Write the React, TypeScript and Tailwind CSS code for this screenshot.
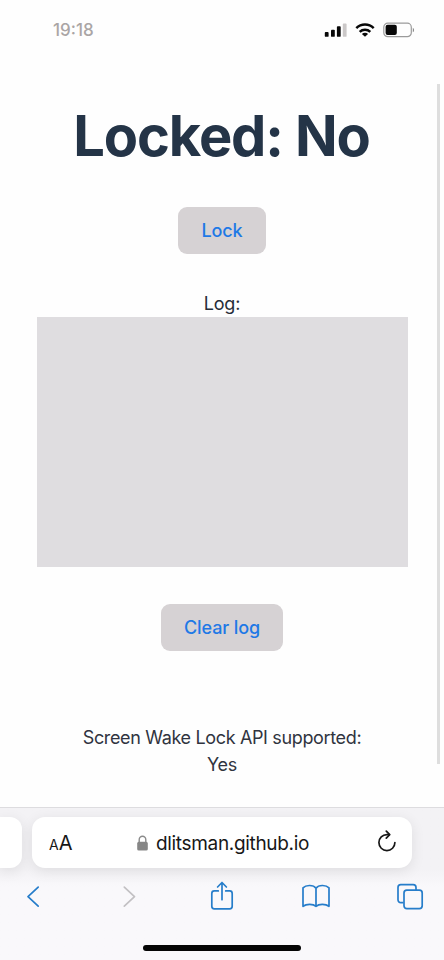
function StatusBar() {
  return (
    <header className="flex h-[60px] items-center justify-between pl-[53px] pr-[29px]">
      <time className="text-[17px] font-medium leading-none text-[#aaa5a5]">19:18</time>
      <div className="flex items-center gap-[8px]">
        <svg width="23" height="16" viewBox="0 0 23 16" fill="#080808">
          <rect x="0.8" y="10" width="3.8" height="4.8" rx="0.9" />
          <rect x="7" y="7.7" width="3.8" height="7.1" rx="0.9" />
          <rect x="12.9" y="4.2" width="3.8" height="10.6" rx="0.9" />
          <rect x="18.8" y="1.5" width="3.8" height="13.3" rx="0.9" fill="#cbc8c8" />
        </svg>
        <svg width="20" height="16" viewBox="0 0 20 16" fill="none" stroke="#080808" strokeWidth="2.5">
          <path d="M1.3 6.1a12.6 12.6 0 0 1 17.4 0" />
          <path d="M4.7 9.8a7.7 7.7 0 0 1 10.6 0" />
          <path d="M10 14.8 6.9 12a4.3 4.3 0 0 1 6.2 0Z" fill="#080808" stroke="none" />
        </svg>
        <svg width="32" height="16" viewBox="0 0 32 16">
          <rect x="0.8" y="1.2" width="27.5" height="13.5" rx="4" fill="none" stroke="#9b9b9b" strokeWidth="1.2" />
          <rect x="2.6" y="2.8" width="11.2" height="10.2" rx="2" fill="#080808" />
          <path d="M29.8 5.7c1.7.8 1.7 3.8 0 4.6Z" fill="#888888" />
        </svg>
      </div>
    </header>
  );
}

function PageButton({ children }: { children: string }) {
  return (
    <button className="h-[47px] rounded-[9px] bg-[#d6d2d4] px-[23px] text-[18px] font-[450] leading-none tracking-[-0.12px] text-[#1f79e6]">
      {children}
    </button>
  );
}

function Page() {
  return (
    <main className="relative flex h-[747px] flex-col items-center text-[18px] leading-[27px] tracking-[-0.35px] text-[#213547]">
      <h1 className="mt-[45px] whitespace-nowrap pr-px text-[56px] font-bold leading-[62px] tracking-[-1.15px] text-[#243447]">Locked: No</h1>
      <div className="mt-[40px] flex">
        <PageButton>Lock</PageButton>
      </div>
      <p className="mt-[36px] tracking-[-0.15px] text-[#252d38]">Log:</p>
      <div className="h-[250px] w-[371px] bg-[#dfdde0]" />
      <div className="mt-[37px] flex">
        <PageButton>Clear log</PageButton>
      </div>
      <p className="mt-[73px] whitespace-nowrap text-center text-[#30343f]">
        Screen Wake Lock API supported:
        <br />
        Yes
      </p>
      <div className="absolute right-[4px] top-[24px] h-[680px] w-[3px] bg-[#dedede]" />
    </main>
  );
}

function AddressBar() {
  return (
    <div className="flex gap-[10px] pt-[9px]">
      <div className="h-[51px] w-[22px] rounded-r-[12px] bg-white shadow-[0_3px_14px_rgba(0,0,0,0.09)]" />
      <div className="flex h-[51px] w-[380px] items-center rounded-[13px] bg-white pl-[17px] pr-[15px] text-[#171717] shadow-[0_3px_14px_rgba(0,0,0,0.09)]">
        <span className="flex w-[24px] items-baseline leading-none tracking-normal">
          <span className="text-[14px]">A</span>
          <span className="text-[20px]">A</span>
        </span>
        <div className="flex flex-1 items-center pl-[64px]">
          <svg width="11" height="16" viewBox="0 0 11 16" className="shrink-0">
            <path d="M2.2 8V4.7a3.3 3.5 0 0 1 6.6 0V8" fill="none" stroke="#8a8a8a" strokeWidth="1.4" />
            <rect x="0.2" y="6.8" width="10.6" height="8.7" rx="1.6" fill="#868686" />
          </svg>
          <span className="ml-[8px] whitespace-nowrap pt-px text-[19px] leading-none tracking-[-0.33px]">dlitsman.github.io</span>
        </div>
        <svg width="20" height="24" viewBox="0 0 20 24" fill="none" stroke="#171717" strokeWidth="1.7" strokeLinecap="round" strokeLinejoin="round" className="-translate-y-px">
          <path d="M17.9 12.6a8 8 0 1 1-8-8h2.2" />
          <path d="M9.3 1.2 12.7 4.7 9.3 8.2" />
        </svg>
      </div>
    </div>
  );
}

function Toolbar() {
  return (
    <nav className="flex items-center pl-[26px] pt-[13px] text-[#267dca]">
      <svg width="14" height="30" viewBox="0 0 14 30" fill="none" stroke="currentColor" strokeWidth="1.7" strokeLinecap="round" strokeLinejoin="round">
        <path d="M12.2 6.1 2 15.6l10.2 9.5" />
      </svg>
      <svg width="14" height="30" viewBox="0 0 14 30" fill="none" stroke="#c2c0c3" strokeWidth="1.7" strokeLinecap="round" strokeLinejoin="round" className="ml-[82px]">
        <path d="M2.3 6.1 12.5 15.6 2.3 25.1" />
      </svg>
      <svg width="24" height="30" viewBox="0 0 24 30" fill="none" stroke="currentColor" strokeWidth="1.7" strokeLinecap="round" strokeLinejoin="round" className="ml-[74px]">
        <path d="M8.3 9.9H4.3a2.5 2.5 0 0 0-2.5 2.5v12.9a2.5 2.5 0 0 0 2.5 2.5h15.4a2.5 2.5 0 0 0 2.5-2.5V12.4a2.5 2.5 0 0 0-2.5-2.5h-4" />
        <path d="M12 18.7V1.7M7.6 6 12 1.5l4.4 4.5" />
      </svg>
      <svg width="30" height="30" viewBox="0 0 30 30" fill="none" stroke="currentColor" strokeWidth="1.7" strokeLinecap="round" strokeLinejoin="round" className="ml-[67px]">
        <path d="M15 7.2C12.4 3.7 5 3.7 2 6.8v18.5c3.4-2.6 10.2-2.5 13 0 2.8-2.5 9.6-2.6 13 0V6.8C25 3.7 17.6 3.7 15 7.2Zm0 0v18.1" />
      </svg>
      <svg width="28" height="30" viewBox="0 0 28 30" fill="none" stroke="currentColor" strokeWidth="1.7" strokeLinejoin="round" className="ml-[65px]">
        <path d="M7.5 21.6H4.8A2.8 2.8 0 0 1 2 18.8V6.4A2.8 2.8 0 0 1 4.8 3.6h12.4A2.8 2.8 0 0 1 20 6.4v2.7" />
        <rect x="8" y="9.2" width="18.2" height="18.4" rx="2.8" />
      </svg>
    </nav>
  );
}

export default function App() {
  return (
    <div className="h-[960px] w-[444px] overflow-hidden bg-[#fefefe] font-['Inter','Liberation_Sans',sans-serif]">
      <StatusBar />
      <Page />
      <footer className="h-[153px] overflow-hidden border-t border-[#dddcdf] bg-linear-to-b from-[#f3f2f5] from-0% via-[#f3f2f5] via-40% to-[#f9f8fb] to-52%">
        <AddressBar />
        <Toolbar />
        <div className="mx-auto mt-[34px] h-[6px] w-[158px] rounded-full bg-[#050505]" />
      </footer>
    </div>
  );
}
